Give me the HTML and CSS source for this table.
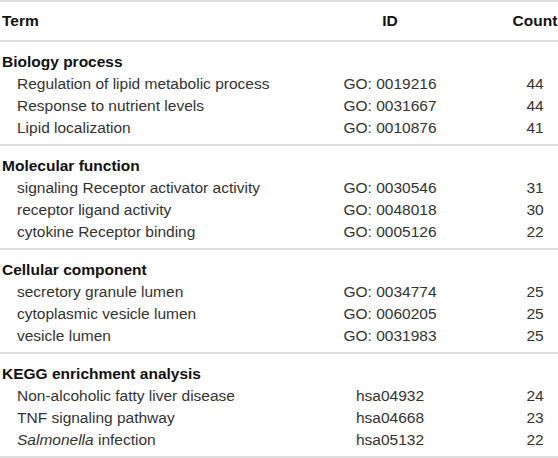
FILE: index.html
```html
<!DOCTYPE html>
<html>
<head>
<meta charset="utf-8">
<link rel="stylesheet" href="styles.css">
</head>
<body>
<table class="tbl">
  <colgroup>
    <col class="c-term">
    <col class="c-id">
    <col class="c-gap">
    <col class="c-count">
  </colgroup>
  <thead>
    <tr class="head">
      <th class="term">Term</th>
      <th class="id">ID</th>
      <th></th>
      <th class="count">Count</th>
    </tr>
  </thead>
  <tbody class="group">
    <tr class="gh"><td class="term" colspan="4">Biology process</td></tr>
    <tr class="item"><td class="term">Regulation of lipid metabolic process</td><td class="id">GO: 0019216</td><td></td><td class="count">44</td></tr>
    <tr class="item"><td class="term">Response to nutrient levels</td><td class="id">GO: 0031667</td><td></td><td class="count">44</td></tr>
    <tr class="item last"><td class="term">Lipid localization</td><td class="id">GO: 0010876</td><td></td><td class="count">41</td></tr>
  </tbody>
  <tbody class="group">
    <tr class="gh"><td class="term" colspan="4">Molecular function</td></tr>
    <tr class="item"><td class="term">signaling Receptor activator activity</td><td class="id">GO: 0030546</td><td></td><td class="count">31</td></tr>
    <tr class="item"><td class="term">receptor ligand activity</td><td class="id">GO: 0048018</td><td></td><td class="count">30</td></tr>
    <tr class="item last"><td class="term">cytokine Receptor binding</td><td class="id">GO: 0005126</td><td></td><td class="count">22</td></tr>
  </tbody>
  <tbody class="group">
    <tr class="gh"><td class="term" colspan="4">Cellular component</td></tr>
    <tr class="item"><td class="term">secretory granule lumen</td><td class="id">GO: 0034774</td><td></td><td class="count">25</td></tr>
    <tr class="item"><td class="term">cytoplasmic vesicle lumen</td><td class="id">GO: 0060205</td><td></td><td class="count">25</td></tr>
    <tr class="item last"><td class="term">vesicle lumen</td><td class="id">GO: 0031983</td><td></td><td class="count">25</td></tr>
  </tbody>
  <tbody class="group">
    <tr class="gh"><td class="term" colspan="4">KEGG enrichment analysis</td></tr>
    <tr class="item"><td class="term">Non-alcoholic fatty liver disease</td><td class="id">hsa04932</td><td></td><td class="count">24</td></tr>
    <tr class="item"><td class="term">TNF signaling pathway</td><td class="id">hsa04668</td><td></td><td class="count">23</td></tr>
    <tr class="item last"><td class="term"><i>Salmonella</i> infection</td><td class="id">hsa05132</td><td></td><td class="count">22</td></tr>
  </tbody>
</table>
</body>
</html>
```

FILE: styles.css
```css
html, body {
  margin: 0;
  padding: 0;
  background: #ffffff;
}

.tbl {
  width: 560px;
  table-layout: fixed;
  border-collapse: collapse;
  font-family: "Liberation Sans", Arial, sans-serif;
  font-size: 15.5px;
  color: #333333;
  border-top: 2px solid #dedede;
  border-bottom: 2px solid #dedede;
}

.c-term { width: 330px; }
.c-id { width: 120px; }
.c-gap { width: 60px; }
.c-count { width: 50px; }

th, td {
  padding: 0;
  line-height: 22px;
  white-space: nowrap;
}

.head th {
  height: 38px;
  font-weight: bold;
  color: #111111;
  border-bottom: 2px solid #dedede;
  vertical-align: middle;
}

.term {
  text-align: left;
  padding-left: 2px;
}

.id,
.count {
  text-align: center;
}

.group + .group {
  border-top: 2px solid #dedede;
}

.gh td {
  font-weight: bold;
  color: #111111;
  padding-top: 9px;
}

.item .term {
  padding-left: 17px;
}

.item.last td {
  padding-bottom: 5px;
}
```
